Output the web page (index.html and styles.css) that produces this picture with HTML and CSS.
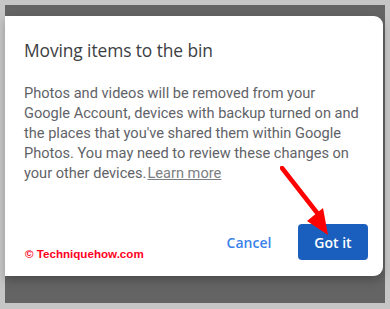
FILE: index.html
```html
<!DOCTYPE html>
<html>
<head>
<meta charset="utf-8">
<link rel="stylesheet" href="styles.css">
</head>
<body>
<div class="frame">
  <div class="dialog">
    <h1 class="title">Moving items to the bin</h1>
    <p class="text">Photos and videos will be removed from your Google Account, devices with backup turned on and the places that you've shared them within Google Photos. You may need to review these changes on your other devices.<a class="link">Learn more</a></p>
    <div class="footer">
      <span class="mark">© Techniquehow.com</span>
      <div class="actions">
        <button class="btn cancel">Cancel</button>
        <button class="btn primary">Got it</button>
      </div>
    </div>
    <svg class="arrow" width="60" height="75" viewBox="0 0 60 75">
      <line x1="2" y1="2" x2="38" y2="48" stroke="#ff0000" stroke-width="4.5" stroke-linecap="round"/>
      <polygon points="27,55 43,42 48,69" fill="#ff0000"/>
    </svg>
  </div>
</div>
</body>
</html>
```
FILE: styles.css
```css
html, body { margin: 0; padding: 0; }
body {
  background: #c6c6c6;
  width: 390px;
  height: 309px;
  overflow: hidden;
  font-family: Roboto, "Liberation Sans", sans-serif;
}
.frame {
  margin: 5px 0 0 5px;
  width: 380px;
  height: 298px;
  background: #646464;
  box-sizing: border-box;
  padding-top: 11px;
}
.dialog {
  position: relative;
  width: 378px;
  height: 260px;
  background: #fff;
  border-radius: 0 9px 9px 0;
  box-shadow: 0 4px 10px rgba(0,0,0,0.25);
  box-sizing: border-box;
  padding: 22px 20px 0 19px;
  display: flex;
  flex-direction: column;
}
.title {
  margin: 0;
  font-family: "Open Sans", Roboto, sans-serif;
  font-weight: 400;
  font-size: 17.4px;
  line-height: 24px;
  color: #3c4043;
  letter-spacing: -0.1px;
}
.text {
  margin: 21px 0 0;
  font-size: 14.6px;
  line-height: 20px;
  color: #5f6368;
}
.link {
  color: #7b7e82;
  text-decoration: underline;
  margin-left: 1px;
}
.footer {
  margin-top: auto;
  margin-bottom: 16px;
  display: flex;
  align-items: flex-end;
  justify-content: space-between;
}
.mark {
  color: #ff0022;
  font-weight: 700;
  font-size: 11.6px;
  font-family: "Liberation Sans", Arial, sans-serif;
  margin-left: 1px;
}
.actions {
  display: flex;
  align-items: center;
  gap: 24px;
}
.btn {
  border: none;
  font-family: "Open Sans", Roboto, sans-serif;
  font-size: 14px;
  font-weight: 600;
  height: 36px;
  border-radius: 4px;
  padding: 0;
}
.cancel {
  background: transparent;
  color: #3a82ea;
  width: 50px;
}
.primary {
  background: #1a5fbe;
  color: #fff;
  width: 70px;
  margin-right: -5px;
}
.arrow {
  position: absolute;
  left: 275px;
  top: 150px;
}
```
